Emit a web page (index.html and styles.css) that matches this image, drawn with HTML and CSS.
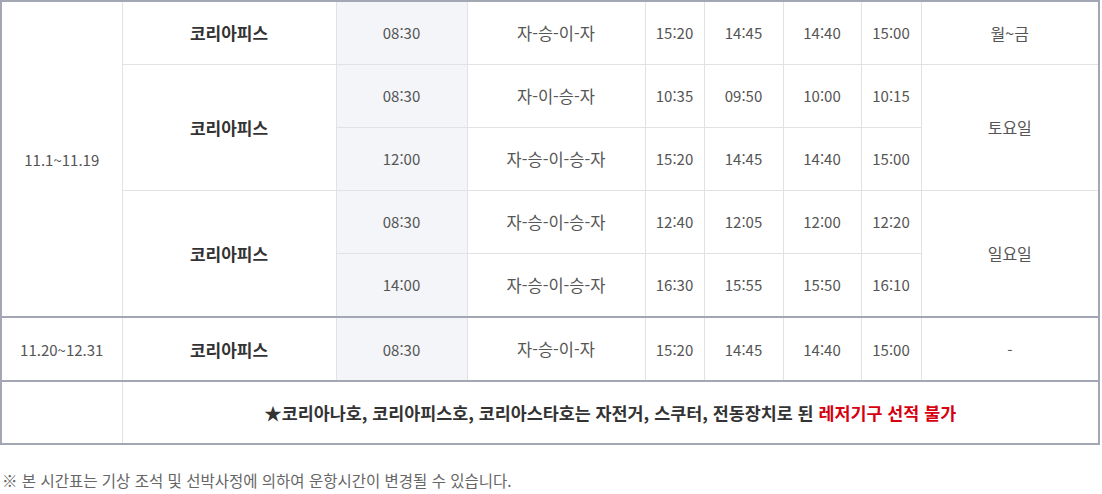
FILE: index.html
```html
<!DOCTYPE html>
<html lang="ko">
<head>
  <meta charset="UTF-8" />
  <title>운항시간표</title>
  <link rel="stylesheet" href="styles.css">
</head>
<body>
  <table class="timetable">
    <colgroup>
      <col style="width:121px">
      <col style="width:214px">
      <col style="width:131px">
      <col style="width:178px">
      <col style="width:59px">
      <col style="width:79px">
      <col style="width:78px">
      <col style="width:60px">
      <col>
    </colgroup>
    <tbody>
      <tr>
        <td class="end" rowspan="5">11.1~11.19</td>
        <td class="ship">코리아피스</td>
        <td class="dep">08:30</td>
        <td class="route">자-승-이-자</td>
        <td>15:20</td>
        <td>14:45</td>
        <td>14:40</td>
        <td>15:00</td>
        <td class="day">월~금</td>
      </tr>
      <tr>
        <td class="ship" rowspan="2">코리아피스</td>
        <td class="dep">08:30</td>
        <td class="route">자-이-승-자</td>
        <td>10:35</td>
        <td>09:50</td>
        <td>10:00</td>
        <td>10:15</td>
        <td class="day" rowspan="2">토요일</td>
      </tr>
      <tr>
        <td class="dep">12:00</td>
        <td class="route">자-승-이-승-자</td>
        <td>15:20</td>
        <td>14:45</td>
        <td>14:40</td>
        <td>15:00</td>
      </tr>
      <tr>
        <td class="ship end" rowspan="2">코리아피스</td>
        <td class="dep">08:30</td>
        <td class="route">자-승-이-승-자</td>
        <td>12:40</td>
        <td>12:05</td>
        <td>12:00</td>
        <td>12:20</td>
        <td class="day end" rowspan="2">일요일</td>
      </tr>
      <tr class="group-end">
        <td class="dep">14:00</td>
        <td class="route">자-승-이-승-자</td>
        <td>16:30</td>
        <td>15:55</td>
        <td>15:50</td>
        <td>16:10</td>
      </tr>
      <tr class="group-end">
        <td>11.20~12.31</td>
        <td class="ship">코리아피스</td>
        <td class="dep">08:30</td>
        <td class="route">자-승-이-자</td>
        <td>15:20</td>
        <td>14:45</td>
        <td>14:40</td>
        <td>15:00</td>
        <td>-</td>
      </tr>
      <tr>
        <td></td>
        <td class="notice" colspan="8">★코리아나호, 코리아피스호, 코리아스타호는 자전거, 스쿠터, 전동장치로 된 <span class="warn">레저기구 선적 불가</span></td>
      </tr>
    </tbody>
  </table>

  <p class="footnote">※ 본 시간표는 기상 조석 및 선박사정에 의하여 운항시간이 변경될 수 있습니다.</p>
</body>
</html>
```

FILE: styles.css
```css
* {
  box-sizing: border-box;
  margin: 0;
  padding: 0;
}

body {
  font-family: "Malgun Gothic", "Noto Sans CJK KR", sans-serif;
  background: #fff;
  color: #555;
  width: 1100px;
}

.timetable {
  width: 1100px;
  table-layout: fixed;
  border-collapse: collapse;
  border: 2px solid #a3a7b3;
  font-size: 15px;
}

.timetable td {
  height: 63px;
  padding: 0;
  text-align: center;
  vertical-align: middle;
  border: 1px solid #e2e2e4;
}

.timetable tr.group-end td,
.timetable td.end {
  border-bottom: 2px solid #a3a7b3;
}

.timetable tr.group-end td {
  height: 64px;
}

.timetable td.ship {
  font-weight: bold;
  color: #333;
  font-size: 17px;
}

.timetable td.route {
  font-size: 16.5px;
}

.timetable td.day {
  font-size: 16px;
}

.timetable td.dep {
  background: #f4f5f9;
}

.timetable td.notice {
  font-weight: bold;
  color: #333;
  font-size: 17.4px;
}

.warn {
  color: #d7000f;
}

.footnote {
  margin-top: 24px;
  font-size: 15.5px;
  color: #666;
  padding-left: 2px;
}
```
